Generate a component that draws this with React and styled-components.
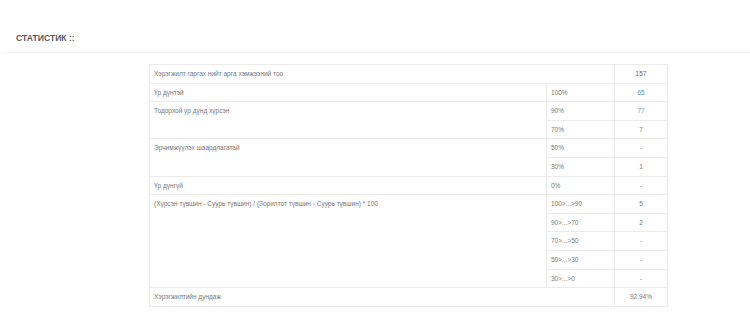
import styled, { createGlobalStyle } from "styled-components";

const GlobalStyle = createGlobalStyle`
  body {
    margin: 0;
    background: #fff;
    font-family: "Liberation Sans", Arial, sans-serif;
  }
`;

const Header = styled.div`
  margin-left: 4px;
  padding: 33px 0 0 12px;
  height: 19px;
  box-sizing: content-box;
  border-bottom: 1px solid #f2f2f2;
`;

const Title = styled.h3`
  margin: 0;
  font-size: 8.6px;
  line-height: 10px;
  font-weight: bold;
  color: #5a5a5a;
`;

const Table = styled.table`
  margin: 11px 0 0 149px;
  width: 518px;
  border-collapse: collapse;
  table-layout: fixed;
  font-size: 6.5px;
  color: #777;
`;

const Cell = styled.td`
  height: 17.6px;
  padding: 0 4px;
  line-height: 17.6px;
  vertical-align: top;
  border: 1px solid #ebebeb;
  text-align: ${p => (p.$center ? "center" : "left")};
  color: ${p => p.$color || "inherit"};
  white-space: nowrap;
`;

const rows = [
  { label: "Хэрэгжилт гаргах нийт арга хэмжээний тоо", items: [{ value: "157", color: "#666" }], span: true },
  { label: "Үр дүнтэй", items: [{ pct: "100%", value: "65", color: "#5b95c4" }] },
  { label: "Тодорхой үр дүнд хүрсэн", items: [{ pct: "90%", value: "77", color: "#759aa8" }, { pct: "70%", value: "7" }] },
  { label: "Эрчимжүүлэх шаардлагатай", items: [{ pct: "50%", value: "-" }, { pct: "30%", value: "1" }] },
  { label: "Үр дүнгүй", items: [{ pct: "0%", value: "-" }] },
  {
    label: "(Хүрсэн түвшин - Суурь түвшин) / (Зорилтот түвшин - Суурь түвшин) * 100",
    items: [
      { pct: "100>...>90", value: "5" },
      { pct: "90>...>70", value: "2" },
      { pct: "70>...>50", value: "-" },
      { pct: "50>...>30", value: "-" },
      { pct: "30>...>0", value: "-" },
    ],
  },
  { label: "Хэрэгжилтийн дундаж", items: [{ value: "92.94%" }], span: true },
];

const StatsTable = () => (
  <Table>
    <colgroup>
      <col style={{ width: 397 }} />
      <col style={{ width: 68 }} />
      <col style={{ width: 53 }} />
    </colgroup>
    <tbody>
      {rows.map(row =>
        row.items.map((item, i) => (
          <tr key={row.label + i}>
            {i === 0 && (
              <Cell rowSpan={row.items.length} colSpan={row.span ? 2 : 1}>
                {row.label}
              </Cell>
            )}
            {!row.span && <Cell>{item.pct}</Cell>}
            <Cell $center $color={item.color}>
              {item.value}
            </Cell>
          </tr>
        ))
      )}
    </tbody>
  </Table>
);

const App = () => (
  <>
    <GlobalStyle />
    <Header>
      <Title>СТАТИСТИК ::</Title>
    </Header>
    <StatsTable />
  </>
);

export default App;
